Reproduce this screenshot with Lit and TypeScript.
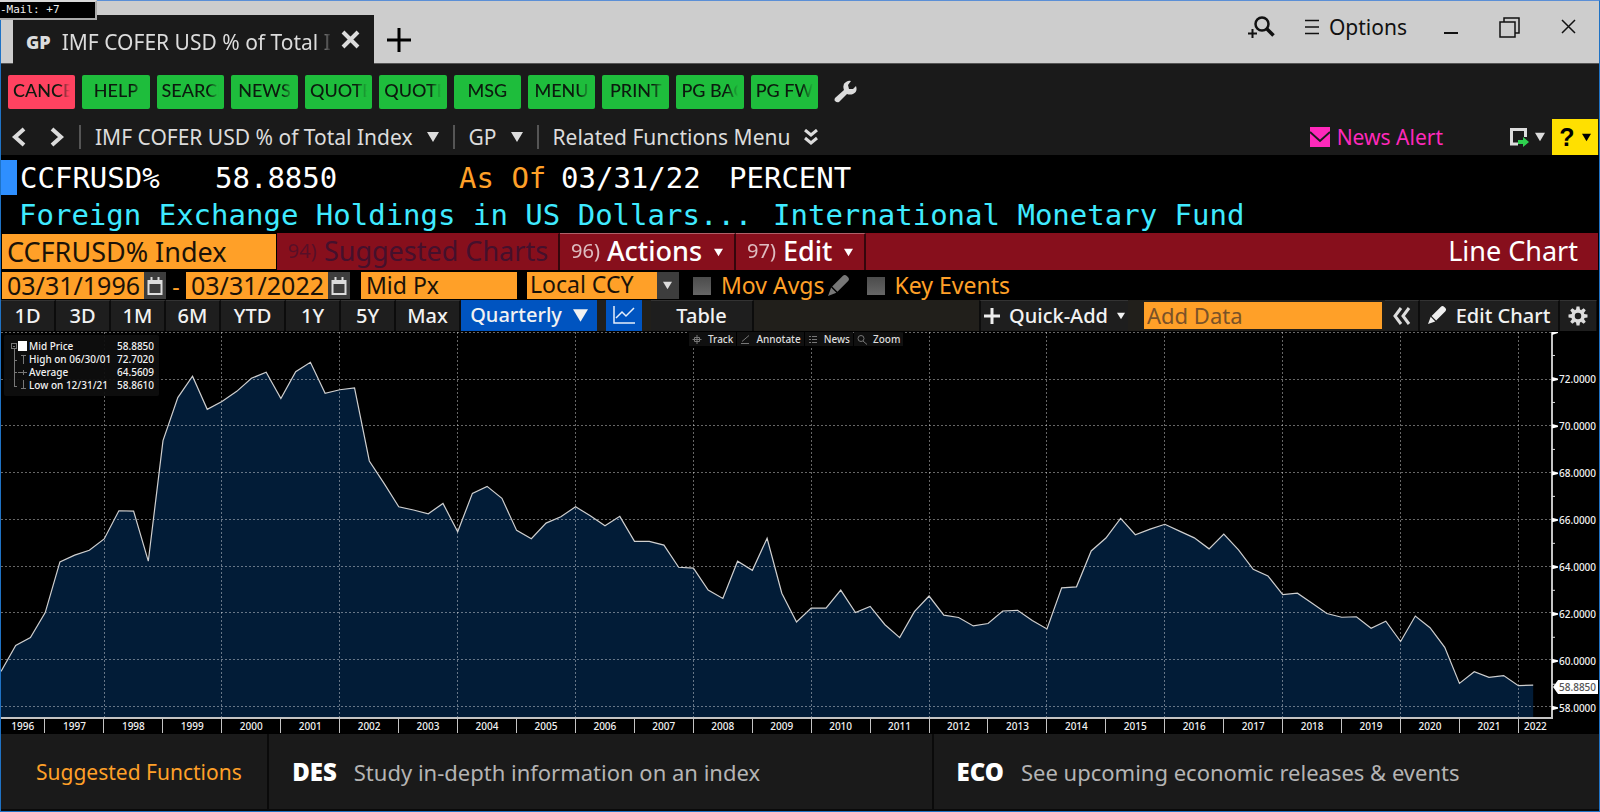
import { LitElement, html, svg, css } from "lit";
import { customElement, property } from "lit/decorators.js";

const PRICES = [
  59.47, 60.58, 60.92, 61.99, 64.16, 64.45, 64.66, 65.14, 66.35, 66.33, 64.19, 69.35,
  71.19, 72.11, 70.69, 71.03, 71.46, 72.02, 72.28, 71.15, 72.3, 72.702, 71.38, 71.53,
  71.61, 68.48, 67.52, 66.52, 66.38, 66.22, 66.66, 65.45, 67.09, 67.39, 66.88, 65.51,
  65.15, 65.82, 66.09, 66.52, 66.13, 65.71, 66.11, 65.04, 65.04, 64.88, 63.93, 63.89,
  62.95, 62.59, 64.19, 63.8, 65.17, 62.82, 61.59, 62.18, 62.18, 62.95, 61.99, 62.25,
  61.47, 60.92, 62.03, 62.7, 61.88, 61.78, 61.42, 61.52, 62.06, 62.09, 61.65, 61.29,
  63.05, 63.09, 64.63, 65.18, 66.02, 65.32, 65.56, 65.77, 65.48, 65.19, 64.72, 65.35,
  64.67, 63.84, 63.56, 62.76, 62.82, 62.39, 61.95, 61.79, 61.81, 61.32, 61.62, 60.75,
  61.84, 61.34, 60.5, 58.96, 59.46, 59.22, 59.29, 58.861, 58.885,
];

const TOP = 74;
const BOTTOM = 57.52;
const QUARTERS = 105.28;
const W = 1550;
const H = 386;
const px = (i: number) => (i / QUARTERS) * W;
const frac = (v: number) => (TOP - v) / (TOP - BOTTOM);
const py = (v: number) => frac(v) * H;

@customElement("price-chart")
class PriceChart extends LitElement {
  static styles = css`
    :host {
      flex: 1;
      display: grid;
      grid-template-columns: 1fr 47px;
      grid-template-rows: 1fr 15px;
      min-height: 300px;
      background: #000;
      position: relative;
      font-size: 10px;
      font-weight: 500;
      color: #f2f2f2;
    }
    .plot { display: block; width: 100%; height: 100%; min-height: 0; border-bottom: 2px solid #c4c4c4; box-sizing: border-box; }
    .axis { display: block; width: 100%; height: 100%; overflow: visible; }
    .holder { position: relative; min-height: 0; }
    .fill { position: absolute; inset: 0; }
    .years { display: flex; line-height: 14px; }
    .year { flex: 4; text-align: center; border-right: 1px solid #c4c4c4; height: 14px; box-sizing: border-box; min-width: 0; }
    .first { flex: 3; }
    .last { flex: 2.28; border-right: 0; }
    .legend {
      position: absolute;
      left: 3px;
      top: 3px;
      padding: 5px 5px 4px 7px;
      background: rgba(14, 14, 14, 0.93);
      display: grid;
      grid-template-columns: 18px 88px auto;
      line-height: 13px;
      border-radius: 2px;
    }
    .legend dl, .legend dt, .legend dd { margin: 0; }
    .legend dd { text-align: right; }
    .tree { grid-row: 1 / span 4; }
    .items { display: contents; }
    .tools { position: absolute; left: 688px; top: 0; display: flex; gap: 1px; }
    .tool {
      display: flex;
      align-items: center;
      gap: 5px;
      height: 14px;
      padding: 0 3px;
      border: 0;
      background: #101010;
      color: #ddd;
      font: 500 10px "Noto Sans", sans-serif;
    }
  `;

  render() {
    const line = PRICES.map((v, i) => `${px(i).toFixed(1)},${py(v).toFixed(1)}`).join(" ");
    const area = `0,${H} ${line} ${px(PRICES.length - 1).toFixed(1)},${H}`;
    const rows = [74, 72, 70, 68, 66, 64, 62, 60, 58];
    const cols = Array.from({ length: 13 }, (_, k) => 7 + k * 8);
    const last = PRICES[PRICES.length - 1];
    const years = Array.from({ length: 27 }, (_, k) => 1996 + k);
    return html`
      <div class="holder">
        <svg class="plot fill" viewBox="0 0 ${W} ${H}" preserveAspectRatio="none" role="img" aria-label="CCFRUSD% quarterly mid price">
          <polygon points=${area} fill="#021c37" />
          <g stroke="#fff" stroke-opacity=".4" stroke-dasharray="2 2" shape-rendering="crispEdges">
            ${rows.map((v) => svg`<line x1="0" x2=${W} y1=${py(v) + 0.5} y2=${py(v) + 0.5} vector-effect="non-scaling-stroke" />`)}
            ${cols.map((q) => svg`<line y1="0" y2=${H} x1=${px(q)} x2=${px(q)} vector-effect="non-scaling-stroke" />`)}
          </g>
          <polyline points=${line} fill="none" stroke="#cfcfcf" stroke-width="1.2" vector-effect="non-scaling-stroke" />
        </svg>
      </div>
      <div class="holder">
        <svg class="axis fill">
          <rect x="-1" y="0" width="2" height="100%" fill="#c4c4c4" />
          ${rows.map((v) => svg`<svg x="0" y=${`${frac(v) * 100}%`} overflow="visible">
            <path d=${v === 74 ? "M0 0h6v1l-6 2z" : "M0 -2L6 -0.5V1L0 2.5z"} fill="#fff" />
            ${v === 74 ? "" : svg`<text x="7" y="4" fill="#f2f2f2">${v.toFixed(4)}</text>`}
          </svg>`)}
          ${rows.slice(1).map((v) => svg`<svg x="0" y=${`${frac(v + 1) * 100}%`} overflow="visible"><path d="M0 0h3" stroke="#ddd" /></svg>`)}
          <svg x="0" y=${`${frac(last) * 100}%`} overflow="visible">
            <path d="M1 0L6 -7H46V7H6z" fill="#fff" />
            <text x="7" y="4" fill="#555">${last.toFixed(4)}</text>
          </svg>
        </svg>
      </div>
      <div class="years">
        ${years.map((y) => html`<div class="year ${y === 1996 ? "first" : y === 2022 ? "last" : ""}">${y}</div>`)}
      </div>
      <div></div>
      <div class="legend">
        <svg class="tree" width="17" height="52" fill="none" stroke="#777" shape-rendering="crispEdges">
          <path d="M.5 3.5h5v5h-5zM2 6h2M3.500 9v37h2M4 20h2M4 32h2" />
          <path d="M10 15.500h5M12.500 16v8M7 32.500h9M12.500 30v5M12.500 40v8M10 48.500h5" />
          <path d="M7 1h9v10h-9z" fill="#fff" stroke="none" />
        </svg>
        <dl class="items">
          <dt>Mid Price</dt><dd>58.8850</dd>
          <dt>High on 06/30/01</dt><dd>72.7020</dd>
          <dt>Average</dt><dd>64.5609</dd>
          <dt>Low on 12/31/21</dt><dd>58.8610</dd>
        </dl>
      </div>
      <div class="tools">
        ${[
          ["Track", svg`<path d="M5 1v9M.5 5.500h9M2.500 3.500h5v4h-5z" />`],
          ["Annotate", svg`<path d="M1 9.500h8M2 7.500L9 1.500" />`],
          ["News", svg`<path d="M1 2.500h2M4 2.500h5M1 5.500h2M4 5.500h5M1 8.500h2M4 8.500h5" />`],
          ["Zoom", svg`<circle cx="4" cy="4.500" r="3" /><path d="M6 7l4 3.500" />`],
        ].map(([t, i]) => html`<button class="tool"><svg width="11" height="11" fill="none" stroke="#777">${i}</svg>${t}</button>`)}
      </div>
    `;
  }
}

@customElement("icon-caret")
class IconCaret extends LitElement {
  @property({ type: Number }) size = 12;
  static styles = css`:host { display: inline-flex; }`;
  render() {
    return html`<svg width=${this.size} height=${this.size} viewBox="0 0 12 12" aria-hidden="true"><path d="M0 1h12L6 11z" fill="currentColor" /></svg>`;
  }
}

@customElement("app-root")
class AppRoot extends LitElement {
  static styles = css`
    :host {
      display: flex;
      flex-direction: column;
      min-height: 100vh;
      box-sizing: border-box;
      border: 1px solid #1f72c4;
      border-top-color: #5b8fd6;
      background: #000;
      color: #dcdcdc;
      font-family: "Noto Sans", "Open Sans", sans-serif;
      font-size: 21px;
      position: relative;
    }
    button, input, select { font: inherit; color: inherit; border: 0; padding: 0; margin: 0; background: none; border-radius: 0; box-sizing: border-box; min-width: 0; }
    svg { display: block; flex: none; }

    .mail {
      position: absolute;
      left: -1px;
      top: -1px;
      width: 97px;
      height: 20px;
      box-sizing: border-box;
      border: 2px solid #d8d8d8;
      border-left: 0;
      border-right-color: #aaa;
      border-bottom-color: #aaa;
      background: #000;
      color: #eee;
      font: 11px/15px "DejaVu Sans Mono", monospace;
    }
    .title { display: flex; height: 63px; box-sizing: border-box; border-bottom: 1px solid #555; background: #cdcdcd; color: #111; }
    .tab {
      align-self: flex-end;
      display: flex;
      align-items: center;
      width: 361px;
      height: 49px;
      margin: 0 0 -1px 12px;
      padding: 0 14px 0 13px;
      box-sizing: border-box;
      background: #1a1a1a;
      color: #dcdcdc;
    }
    .code { font: 800 18px "Open Sans", sans-serif; margin: 4px 11px 0 0; }
    .name { flex: 1; overflow: hidden; white-space: nowrap; line-height: 34px; margin-top: 4px; mask-image: linear-gradient(to right, #000 255px, transparent 270px); }
    .add { align-self: center; margin: 15px 0 0 13px; }
    .find { margin-left: auto; }
    .sys { display: flex; align-items: center; padding-bottom: 10px; }
    .options { gap: 10px; margin-left: 30px; }
    .min { margin-left: 37px; }
    .max { margin-left: 41px; }
    .close { margin: 0 23px 0 41px; }

    .keys { display: flex; align-items: center; height: 55px; padding: 0 7px; background: #1a1a1a; }
    .keyset { display: grid; grid-template-columns: repeat(11, 1fr); gap: 7px; width: 810px; }
    .key { height: 34px; border-radius: 2px; background: #1ebd3c; color: #0c1a0e; padding: 0 5px; font: 500 18px Lato, sans-serif; }
    .cancel { background: #ff4260; }
    .label { display: block; overflow: hidden; white-space: nowrap; line-height: 26px; padding-bottom: 3px; mask-image: linear-gradient(to right, #000 46px, transparent 57px); }
    .wrench { margin-left: 16px; }

    .nav { display: flex; align-items: center; height: 36px; background: #1a1a1a; white-space: nowrap; }
    .back { margin-left: 10px; }
    .fwd { margin-left: 24px; }
    .crumb { display: flex; align-items: center; gap: 14px; height: 24px; margin-left: 14px; padding-left: 14px; border-left: 2px solid #555; }
    .alert { display: flex; align-items: center; gap: 7px; margin-left: auto; color: #ff29bb; text-decoration: none; }
    .export { display: flex; align-items: center; gap: 5px; margin: 0 7px 0 67px; }
    .help { display: flex; align-items: center; justify-content: center; gap: 7px; width: 46px; height: 36px; margin-right: 1px; background: #ffe000; color: #000; font: 700 25px "Liberation Sans", sans-serif; }

    .quote { height: 78px; box-sizing: border-box; padding-top: 5px; font: 29px/37px "DejaVu Sans Mono", monospace; color: #fff; }
    .line { display: flex; white-space: pre; }
    .cursor { width: 16px; height: 35px; background: #2e8fff; }
    .symbol { width: 195px; padding-left: 3px; }
    .value { width: 244px; }
    .asof { width: 102px; color: #ffa028; }
    .date { width: 168px; }
    .desc { width: 754px; }
    .second { padding-left: 18px; color: #3feaff; }

    .red { display: flex; height: 38px; box-sizing: border-box; border-bottom: 1px solid #000; margin-right: 1px; background: #870f1c; color: #fff; font-size: 27px; white-space: nowrap; }
    .security { width: 276px; border: 1px solid #000; background: #ffa028; color: #1a1208; padding-left: 5px; }
    .menu { display: flex; align-items: center; padding: 0 11px 3px; border-right: 2px solid #35060c; border-top: 1px solid #b06068; font-weight: 500; gap: 7px; }
    .off { color: #45102c; width: 283px; font-weight: 400; border-top-color: #870f1c; }
    .num { font-size: 20px; font-weight: 400; opacity: 0.72; }
    .menu icon-caret { margin: 3px 0 0 5px; }
    .kind { margin: 0 20px 0 auto; line-height: 35px; }

    .fields { display: flex; align-items: center; height: 29px; color: #ffa028; font-size: 23px; padding-left: 1px; white-space: nowrap; }
    .box { height: 27px; background: #ffa028; color: #1a1208; padding: 0 0 2px 5px; }
    .day { width: 142px; font-size: 25px; }
    .cal { display: flex; align-items: center; justify-content: center; width: 22px; height: 27px; background: #3d3d3d; }
    .dash { width: 20px; text-align: center; }
    .px { width: 156px; margin: 0 10px 0 11px; }
    .ccy { position: relative; display: flex; color: #ddd; }
    .pick { width: 152px; appearance: none; padding: 0 0 2px 3px; line-height: 25px; background: linear-gradient(to right, #ffa028 130px, #3d3d3d 130px); }
    .ccy icon-caret { position: absolute; right: 7px; top: 9px; pointer-events: none; }
    .check { display: flex; align-items: center; gap: 10px; margin-left: 14px; height: 27px; line-height: 25px; }
    .tick { appearance: none; width: 18px; height: 18px; background: linear-gradient(#4c4c4c, #666); }
    .pencil { margin: 0 3px; }

    .bar { display: flex; height: 32px; box-sizing: border-box; border-bottom: 1px solid #000; margin-right: 2px; background: #211f1b; color: #f2f2f2; font-size: 20px; font-weight: 500; white-space: nowrap; }
    .btn { display: flex; align-items: center; justify-content: center; gap: 9px; background: #1e1e1e; border-right: 2px solid #0c0c0c; border-top: 1px solid #333; line-height: 28px; padding-bottom: 1px; }
    .w55 { width: 55px; }
    .w66 { width: 65px; }
    .blue { background: #0054c0; border: 0; width: 136px; gap: 11px; }
    .chart { width: 36px; margin: 0 9px; }
    .table { width: 103px; }
    .quick { width: 149px; margin-left: auto; border-left: 2px solid #0c0c0c; border-right: 0; }
    .data { width: 238px; height: 27px; margin: 2px 3px 0 16px; background: #ffa028; color: #1a1208; padding: 0 0 2px 3px; font-size: 22px; font-weight: 400; }
    .data::placeholder { color: #7a5228; opacity: 1; }
    .fold { width: 35px; }
    .edit { width: 140px; }
    .gear { width: 37px; border-right-width: 1px; }

    .foot { display: grid; grid-template-columns: 266fr 662fr 665fr; gap: 2px; height: 75px; padding-bottom: 2px; background: #0a0a0a; white-space: nowrap; }
    .card { display: flex; align-items: center; gap: 17px; padding-left: 23px; background: #1a1a1a; color: #b4b4b4; text-decoration: none; font-size: 22px; }
    .lead { color: #ffa028; padding-left: 35px; font-size: 21px; }
    .fn { color: #fff; font-weight: 900; font-size: 24px; }
  `;

  private crumb(text: string) {
    return html`<button class="crumb">${text}<icon-caret></icon-caret></button>`;
  }

  private calendar(label: string) {
    return html`<button class="cal" aria-label=${label}>
      <svg width="16" height="18" fill="none" stroke="#ddd" stroke-width="2"><path d="M1.500 4h13v13h-13zM1 6h14M4.500 0v4M11.500 0v4" /></svg>
    </button>`;
  }

  private pencil(color: string) {
    return svg`<path d="M0 20l3-8 5 5zM4 11L14 1q2-2 4 0l1 1q2 2 0 4L9 16z" fill=${color} />`;
  }

  render() {
    return html`
      <header class="title">
        <div class="tab">
          <span class="code">GP</span><span class="name">IMF COFER USD % of Total Index</span>
          <button aria-label="Close tab"><svg width="19" height="19" stroke="#dcdcdc" stroke-width="4"><path d="M2 2l15 15M17 2L2 17" /></svg></button>
        </div>
        <button class="add" aria-label="New tab"><svg width="24" height="24" stroke="#000" stroke-width="3"><path d="M12 0v24M0 12h24" /></svg></button>
        <button class="sys find" aria-label="Search"><svg width="27" height="22" fill="none" stroke="#111"><circle cx="14" cy="8" r="6.500" stroke-width="2.500" /><path d="M18.500 12.500l7 7" stroke-width="3.500" /><path d="M0 17.500h9M4.500 13v9" stroke-width="2" /></svg></button>
        <button class="sys options"><svg width="14" height="16" stroke="#111" stroke-width="1.500"><path d="M0 1.500h14M0 8h14M0 14.500h14" /></svg>Options</button>
        <button class="sys min" aria-label="Minimize"><svg width="14" height="20" stroke="#111" stroke-width="2"><path d="M0 16h14" /></svg></button>
        <button class="sys max" aria-label="Restore"><svg width="21" height="21" fill="none" stroke="#111" stroke-width="1.500"><path d="M1 5h15v15h-15zM5 5V1h15v15h-4" /></svg></button>
        <button class="sys close" aria-label="Close"><svg width="15" height="17" stroke="#111" stroke-width="1.500"><path d="M1 1l13 13M14 1L1 14" /></svg></button>
      </header>

      <div class="keys">
        <div class="keyset">
          ${["CANCEL", "HELP", "SEARCH", "NEWS", "QUOTE", "QUOTE", "MSG", "MENU", "PRINT", "PG BACK", "PG FWD"].map(
            (k) => html`<button class="key ${k === "CANCEL" ? "cancel" : ""}"><span class="label">${k}</span></button>`
          )}
        </div>
        <button class="wrench" aria-label="Settings">
          <svg width="23" height="23" viewBox="0 0 23 23"><path d="M1 18L10 10Q8 4 12 2Q15 0 17 1L14 5L15 9L19 9L22 6Q24 12 19 14Q16 15 13 14L5 22Q3 23 1 21Q0 20 1 18z" fill="#dcdcdc" /></svg>
        </button>
      </div>

      <nav class="nav">
        <button class="back" aria-label="Back"><svg width="15" height="20" fill="none" stroke="#dcdcdc" stroke-width="4"><path d="M13 2L4 10l9 8" /></svg></button>
        <button class="fwd" aria-label="Forward"><svg width="15" height="20" fill="none" stroke="#dcdcdc" stroke-width="4"><path d="M2 2l9 8-9 8" /></svg></button>
        ${this.crumb("IMF COFER USD % of Total Index")} ${this.crumb("GP")}
        <button class="crumb">Related Functions Menu
          <svg width="14" height="16" fill="none" stroke="#dcdcdc" stroke-width="3"><path d="M1 1l6 5 6-5M1 9l6 5 6-5" /></svg>
        </button>
        <a class="alert" href="#news">
          <svg width="20" height="20"><path d="M0 0h20v20H0z" fill="#ff29bb" /><path d="M0 5l10 9 10-9" fill="none" stroke="#1a1a1a" stroke-width="2" /></svg>News Alert
        </a>
        <button class="export" aria-label="Export">
          <svg width="20" height="19" fill="none"><path d="M8 16H1.500V1.500h14V9" stroke="#dcdcdc" stroke-width="3" /><path d="M8 12h5V9l6 5-6 5v-3H8z" fill="#2fd14f" /></svg><icon-caret size="10"></icon-caret>
        </button>
        <button class="help" aria-label="Help">?<icon-caret size="9"></icon-caret></button>
      </nav>

      <section class="quote">
        <div class="line">
          <span class="cursor"></span><span class="symbol">CCFRUSD%</span><span class="value">58.8850</span><span class="asof">As Of</span><span class="date">03/31/22</span><span>PERCENT</span>
        </div>
        <div class="line second"><span class="desc">Foreign Exchange Holdings in US Dollars...</span><span>International Monetary Fund</span></div>
      </section>

      <div class="red">
        <input class="security" aria-label="Security" value="CCFRUSD% Index" />
        <button class="menu off" disabled><span class="num">94)</span>Suggested Charts</button>
        <button class="menu"><span class="num">96)</span>Actions<icon-caret size="9"></icon-caret></button>
        <button class="menu"><span class="num">97)</span>Edit<icon-caret size="9"></icon-caret></button>
        <span class="kind">Line Chart</span>
      </div>

      <div class="fields">
        <input class="box day" aria-label="From" value="03/31/1996" />${this.calendar("Pick start date")}
        <span class="dash">-</span>
        <input class="box day" aria-label="To" value="03/31/2022" />${this.calendar("Pick end date")}
        <input class="box px" aria-label="Price field" value="Mid Px" />
        <span class="ccy"><select class="box pick" aria-label="Currency"><option>Local CCY</option></select><icon-caret size="9"></icon-caret></span>
        <label class="check"><input class="tick" type="checkbox" />Mov Avgs</label>
        <svg class="pencil" width="22" height="22" viewBox="0 0 21 21">${this.pencil("#777")}</svg>
        <label class="check"><input class="tick" type="checkbox" />Key Events</label>
      </div>

      <div class="bar">
        ${["1D", "3D", "1M", "6M", "YTD", "1Y", "5Y", "Max"].map(
          (r) => html`<button class="btn ${r.length > 2 ? "w66" : "w55"}">${r}</button>`
        )}
        <button class="btn blue">Quarterly<icon-caret size="15"></icon-caret></button>
        <button class="btn blue chart" aria-label="Line chart"><svg width="22" height="18" fill="none" stroke="#e6eefa" stroke-width="1.500"><path d="M1 0v17h21M3 12l6-6 4 4 8-8" /></svg></button>
        <button class="btn table">Table</button>
        <button class="btn quick"><svg width="16" height="16" stroke="#eee" stroke-width="3"><path d="M8 0v16M0 8h16" /></svg>Quick-Add<icon-caret size="8"></icon-caret></button>
        <input class="data" aria-label="Add Data" placeholder="Add Data" />
        <button class="btn fold" aria-label="Collapse"><svg width="18" height="18" fill="none" stroke="#ddd" stroke-width="3"><path d="M8 1L2 9l6 8M16 1l-6 8 6 8" /></svg></button>
        <button class="btn edit"><svg width="19" height="19" viewBox="0 0 21 21">${this.pencil("#eee")}</svg>Edit Chart</button>
        <button class="btn gear" aria-label="Chart settings">
          <svg width="20" height="20" viewBox="-10 -10 20 20"><circle r="5" fill="none" stroke="#ddd" stroke-width="3.500" />${[0, 45, 90, 135, 180, 225, 270, 315].map((a) => svg`<path d="M-2 -6L-1.500 -9.500H1.500L2 -6z" fill="#ddd" transform="rotate(${a})" />`)}</svg>
        </button>
      </div>

      <price-chart></price-chart>

      <footer class="foot">
        <div class="card lead">Suggested Functions</div>
        <a class="card" href="#des"><span class="fn">DES</span>Study in-depth information on an index</a>
        <a class="card" href="#eco"><span class="fn">ECO</span>See upcoming economic releases &amp; events</a>
      </footer>
      <div class="mail">-Mail: +7</div>
    `;
  }
}
